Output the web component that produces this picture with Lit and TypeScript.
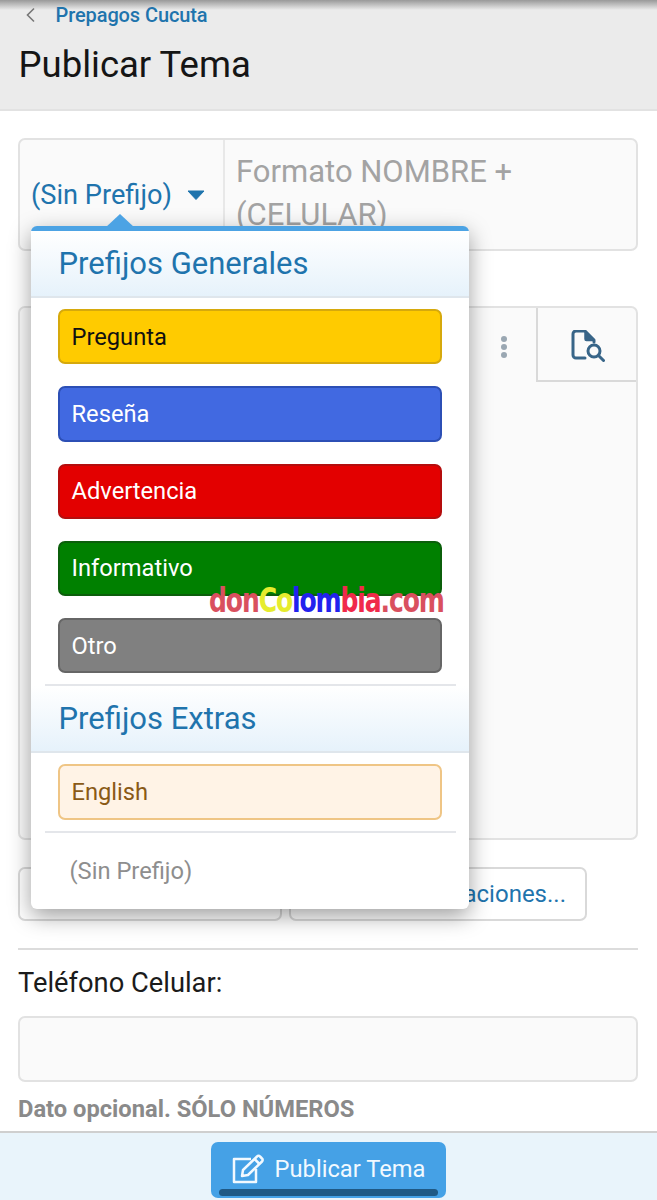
import { LitElement, html, css } from "lit";
import { customElement } from "lit/decorators.js";

@customElement("app-root")
export class AppRoot extends LitElement {
  static styles = css`
    :host { display: block; width: 657px; height: 1200px; position: relative; overflow: hidden; background: #fff; font-family: Roboto, "Liberation Sans", sans-serif; color: #111; }
    * { box-sizing: border-box; }
    .head { height: 111px; background: #ebebeb; border-bottom: 2px solid #e2e2e2; position: relative; padding: 0 19px; }
    .topshade { position: absolute; left: 0; right: 0; top: 0; height: 10px; background: linear-gradient(#999, #ebebeb); }
    .crumb { display: flex; align-items: center; height: 30px; position: relative; padding-left: 6px; gap: 19.500px; font-weight: 500; font-size: 20px; color: #1f74ad; letter-spacing: -0.1px; }
    .title { font-size: 36.500px; line-height: 40px; margin-top: 15px; margin-left: -0.500px; color: #151515; }
    .main { padding: 27px 19px 0 18px; }
    .subject { display: flex; height: 113px; border: 2px solid #e2e2e2; border-radius: 7px; background: #fafafa; overflow: hidden; }
    .pick { width: 205px; flex: none; border-right: 2px solid #e8e8e8; display: flex; align-items: center; padding: 1px 0 0 11px; color: #1f74ad; font-size: 27.200px; gap: 15px; }
    .caret { width: 18px; height: 10px; flex: none; }
    .ph { font-size: 31px; line-height: 43px; color: #a3a3a3; padding: 10px 11px; }
    .editor { margin-top: 55px; height: 534px; border: 2px solid #e2e2e2; border-radius: 7px; background: #fafafa; overflow: hidden; }
    .toolbar { height: 74px; display: flex; justify-content: flex-end; }
    .more { width: 68px; display: flex; align-items: center; justify-content: center; padding: 4px 0 0 4px; }
    .preview { width: 100px; border-left: 2px solid #d9d9d9; border-bottom: 2px solid #d9d9d9; display: flex; align-items: center; justify-content: center; padding: 4px 0 0 2px; }
    .btns { display: flex; gap: 7px; margin-top: 27px; }
    .btn { height: 54px; border: 2px solid #d9d9d9; border-radius: 7px; background: #fff; color: #1f74ad; font-size: 24px; display: flex; align-items: center; justify-content: flex-end; padding: 0 19px; }
    .b1 { width: 264px; }
    .b2 { width: 298px; }
    .rule { height: 2px; background: #dcdcdc; margin-top: 27px; }
    .lab { font-size: 27.300px; line-height: 30px; margin-top: 18px; color: #1b1b1b; }
    .field { height: 66px; border: 2px solid #e2e2e2; border-radius: 7px; background: #fafafa; margin-top: 18px; }
    .hint { font-size: 23.700px; font-weight: 700; color: #8a8a8a; line-height: 26px; margin-top: 14px; }
    .foot { position: absolute; left: 0; right: 0; bottom: 0; height: 69px; background: #e9f4fb; border-top: 2px solid #cfcfcf; display: flex; justify-content: center; padding-top: 9px; }
    .pub { width: 235px; height: 56px; background: #45a1e6; border-radius: 7px; color: #f2f9ff; font-size: 23.700px; display: flex; align-items: center; justify-content: center; gap: 10px; position: relative; padding: 0 1px 3px 0; }
    .pub i { position: absolute; left: 8px; right: 8px; bottom: 2px; height: 7px; background: #1f5985; border-radius: 4px; }
    .menu { position: absolute; left: 31px; top: 226px; width: 438px; height: 683px; background: #fff; border-top: 5px solid #4ca3e4; border-radius: 6px; box-shadow: 0 7px 22px rgba(0,0,0,.38); }
    .arrow { position: absolute; left: 74px; top: -17px; width: 0; height: 0; border-left: 15px solid transparent; border-right: 15px solid transparent; border-bottom: 14px solid #4ca3e4; }
    .sec { height: 67px; background: linear-gradient(#fff, #e6f2fb); border-bottom: 2px solid #dfe6ec; color: #1f74ad; font-size: 31px; display: flex; align-items: center; padding-left: 27.500px; }
    .items { display: flex; flex-direction: column; gap: 22px; padding: 11px 27px 0 27px; }
    .it { height: 55.250px; border-radius: 7px; border: 2px solid; font-size: 23.700px; display: flex; align-items: center; padding: 0 11.500px; }
    .y { background: #ffcb00; border-color: #d6a90c; color: #111; }
    .bl { background: #4169e1; border-color: #2c4fb5; color: #fff; }
    .r { background: #e30000; border-color: #b40d0d; color: #fff; }
    .g { background: #008000; border-color: #0b5f0b; color: #fff; }
    .gr { background: #808080; border-color: #666; color: #fff; }
    .en { background: #fff3e6; border-color: #efc585; color: #8a5a16; }
    .hr { height: 2px; background: #e4e6ea; margin: 11px 13px 0 14px; }
    .none { font-size: 23.700px; color: #8e8e8e; padding: 23px 0 0 38.500px; line-height: 30px; }
    .mark { position: absolute; left: 209px; top: 583px; font-family: "DejaVu Sans", sans-serif; font-size: 33px; font-weight: 700; line-height: 36px; letter-spacing: -1.5px; color: #d9505f; transform: scaleX(.76); transform-origin: left; white-space: nowrap; }
    .mark .c1 { color: #e6ec2e; }
    .mark .c2 { color: #2222ee; }
    .mark .c3 { color: #f02a4a; }
  `;

  render() {
    return html`
      <div class="head">
        <div class="topshade"></div>
        <div class="crumb">
          <svg width="11" height="16" viewBox="0 0 11 16" fill="none" stroke="#777" stroke-width="1.6"><path d="M9 1.5 2.5 8 9 14.5"/></svg>
          <span>Prepagos Cucuta</span>
        </div>
        <div class="title">Publicar Tema</div>
      </div>
      <div class="main">
        <div class="subject">
          <div class="pick">
            <span>(Sin Prefijo)</span>
            <svg class="caret" viewBox="0 0 18 10"><path d="M1 1h16L9 9.5z" fill="#1f74ad" stroke="#1f74ad" stroke-linejoin="round"/></svg>
          </div>
          <div class="ph">Formato NOMBRE + (CELULAR)</div>
        </div>
        <div class="editor">
          <div class="toolbar">
            <div class="more">
              <svg width="8" height="24" viewBox="0 0 8 24" fill="#9aa7b2"><circle cx="4" cy="4" r="3"/><circle cx="4" cy="12" r="3"/><circle cx="4" cy="20" r="3"/></svg>
            </div>
            <div class="preview">
              <svg width="34" height="32" viewBox="0 0 34 32" fill="none" stroke="#386588" stroke-width="3" stroke-linecap="round" stroke-linejoin="round">
                <path d="M14 28H5a3 3 0 0 1-3-3V4a3 3 0 0 1 3-3h9l9 9v2"/>
                <path d="M14 1.5V9a1.500 1.500 0 0 0 1.500 1.500H22" fill="#386588" stroke-width="1.500"/>
                <circle cx="23" cy="21" r="6"/>
                <path d="m27.500 25.500 5 5"/>
              </svg>
            </div>
          </div>
        </div>
        <div class="btns">
          <div class="btn b1"></div>
          <div class="btn b2">Notificaciones...</div>
        </div>
        <div class="rule"></div>
        <div class="lab">Teléfono Celular:</div>
        <div class="field"></div>
        <div class="hint">Dato opcional. SÓLO NÚMEROS</div>
      </div>
      <div class="foot">
        <div class="pub">
          <svg width="34" height="30" viewBox="0 0 34 30" fill="none" stroke="#f2f9ff" stroke-width="2.500" stroke-linejoin="round">
            <path d="M20 5H3v23h22V15"/>
            <path d="M11 22l1-6L26 2.500a2 2 0 0 1 3 0l2 2a2 2 0 0 1 0 3L17 21z"/>
            <path d="m23.500 5 5 5"/>
          </svg>
          <span>Publicar Tema</span>
          <i></i>
        </div>
      </div>
      <div class="menu">
        <div class="arrow"></div>
        <div class="sec">Prefijos Generales</div>
        <div class="items">
          <div class="it y">Pregunta</div>
          <div class="it bl">Reseña</div>
          <div class="it r">Advertencia</div>
          <div class="it g">Informativo</div>
          <div class="it gr">Otro</div>
        </div>
        <div class="hr"></div>
        <div class="sec">Prefijos Extras</div>
        <div class="items">
          <div class="it en">English</div>
        </div>
        <div class="hr"></div>
        <div class="none">(Sin Prefijo)</div>
      </div>
      <div class="mark">don<span class="c1">Co</span><span class="c2">lom</span><span class="c3">bia</span>.com</div>
    `;
  }
}
